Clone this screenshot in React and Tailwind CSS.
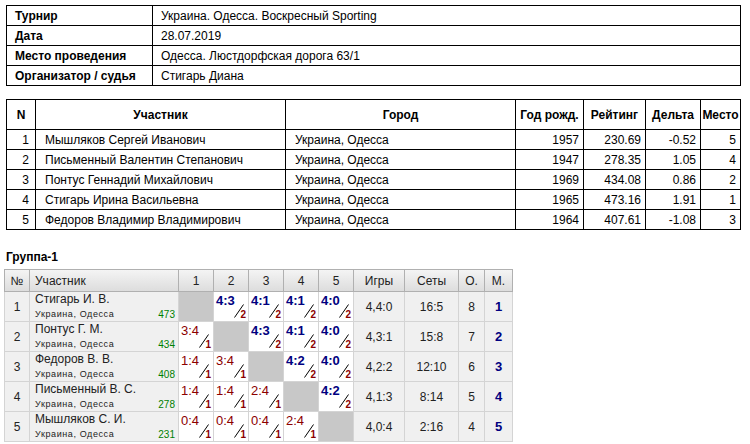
import React from 'react';

const info = [
  ['Турнир', 'Украина. Одесса. Воскресный Sporting'],
  ['Дата', '28.07.2019'],
  ['Место проведения', 'Одесса. Люстдорфская дорога 63/1'],
  ['Организатор / судья', 'Стигарь Диана'],
];

const players = [
  [1, 'Мышляков Сергей Иванович', 'Украина, Одесса', 1957, '230.69', '-0.52', 5],
  [2, 'Письменный Валентин Степанович', 'Украина, Одесса', 1947, '278.35', '1.05', 4],
  [3, 'Понтус Геннадий Михайлович', 'Украина, Одесса', 1969, '434.08', '0.86', 2],
  [4, 'Стигарь Ирина Васильевна', 'Украина, Одесса', 1965, '473.16', '1.91', 1],
  [5, 'Федоров Владимир Владимирович', 'Украина, Одесса', 1964, '407.61', '-1.08', 3],
];

const group = [
  { name: 'Стигарь И. В.', r: 473, res: [null, '4:3', '4:1', '4:1', '4:0'], g: '4,4:0', s: '16:5', o: 8 },
  { name: 'Понтус Г. М.', r: 434, res: ['3:4', null, '4:3', '4:1', '4:0'], g: '4,3:1', s: '15:8', o: 7 },
  { name: 'Федоров В. В.', r: 408, res: ['1:4', '3:4', null, '4:2', '4:0'], g: '4,2:2', s: '12:10', o: 6 },
  { name: 'Письменный В. С.', r: 278, res: ['1:4', '1:4', '2:4', null, '4:2'], g: '4,1:3', s: '8:14', o: 5 },
  { name: 'Мышляков С. И.', r: 231, res: ['0:4', '0:4', '0:4', '2:4', null], g: '4,0:4', s: '2:16', o: 4 },
];

const Score = ({ v }) => {
  const win = v[0] === '4';
  return (
    <div className="relative h-[29px] w-full">
      <span className={`absolute left-[2px] top-[2px] text-[13px] leading-[14px] ${win ? 'font-bold text-[#000080]' : 'text-[#8b0000]'}`}>{v}</span>
      <svg className="absolute left-[20px] top-[12px]" width="10" height="14"><line x1="0.5" y1="13.5" x2="9.5" y2="0.5" stroke="#000" strokeWidth="1" /></svg>
      <span className="absolute right-[2px] bottom-[1px] text-[10px] leading-[10px] font-bold text-[#8b0000]">{win ? 2 : 1}</span>
    </div>
  );
};

export default function App() {
  return (
    <div className="bg-white w-[750px] h-[444px] overflow-hidden text-[12px] leading-[14px] text-black whitespace-nowrap" style={{ fontFamily: '"Liberation Sans", Arial, sans-serif' }}>
      <div className="pl-[6px] pt-[5px]">
        <table className="border-collapse w-[735px] table-fixed">
          <colgroup><col className="w-[146px]" /><col /></colgroup>
          <tbody>
            {info.map(([k, v]) => (
              <tr key={k} className="h-[20px]">
                <td className="border border-black px-[8px] font-bold">{k}</td>
                <td className="border border-black px-[8px]">{v}</td>
              </tr>
            ))}
          </tbody>
        </table>

        <table className="border-collapse w-[735px] table-fixed mt-[13px]">
          <colgroup>
            <col className="w-[29px]" /><col className="w-[250px]" /><col className="w-[230px]" />
            <col className="w-[68px]" /><col className="w-[62px]" /><col className="w-[55px]" /><col />
          </colgroup>
          <thead>
            <tr className="h-[30px] font-bold">
              {['N', 'Участник', 'Город', 'Год рожд.', 'Рейтинг', 'Дельта', 'Место'].map(h => (
                <td key={h} className="border border-black text-center">{h}</td>
              ))}
            </tr>
          </thead>
          <tbody>
            {players.map(p => (
              <tr key={p[0]} className="h-[20px]">
                <td className="border border-black text-right pr-[6px]">{p[0]}</td>
                <td className="border border-black px-[9px]">{p[1]}</td>
                <td className="border border-black px-[9px]">{p[2]}</td>
                <td className="border border-black text-right pr-[4px]">{p[3]}</td>
                <td className="border border-black text-right pr-[4px]">{p[4]}</td>
                <td className="border border-black text-right pr-[4px]">{p[5]}</td>
                <td className="border border-black text-right pr-[4px]">{p[6]}</td>
              </tr>
            ))}
          </tbody>
        </table>
      </div>

      <div className="pl-[4px] pt-[20px]">
        <div className="font-bold text-[12px] leading-[14px] pl-[2px] mb-[5px]">Группа-1</div>
        <table className="border-collapse table-fixed w-[509px] bg-[#f0f0f0]">
          <colgroup>
            <col className="w-[25px]" /><col className="w-[149px]" />
            <col className="w-[35px]" /><col className="w-[35px]" /><col className="w-[35px]" /><col className="w-[35px]" /><col className="w-[35px]" />
            <col className="w-[51px]" /><col className="w-[54px]" /><col className="w-[26px]" /><col />
          </colgroup>
          <thead>
            <tr className="h-[22px] bg-gradient-to-b from-[#f4f4f4] to-[#dcdcdc] text-[#222]">
              {['№', 'Участник', '1', '2', '3', '4', '5', 'Игры', 'Сеты', 'О.', 'М.'].map((h, i) => (
                <td key={i} className={`border border-[#b0b0b0] p-0 ${i === 1 ? 'text-left pl-[5px]' : 'text-center'}`}>{h}</td>
              ))}
            </tr>
          </thead>
          <tbody>
            {group.map((p, i) => (
              <tr key={i} className="h-[30px] text-[#222]">
                <td className="border border-[#d4d4d4] text-center p-0">{i + 1}</td>
                <td className="border border-[#d4d4d4] pl-[5px] pr-[3px] py-0 leading-[13px]">
                  <div className="text-[12px]">{p.name}</div>
                  <div className="flex justify-between text-[9px] mt-[2px]">
                    <span className="tracking-[0.6px]">Украина, Одесса</span>
                    <span className="text-[#008000] text-[10px]">{p.r}</span>
                  </div>
                </td>
                {p.res.map((v, j) => (
                  <td key={j} className={`border border-[#d4d4d4] p-0 ${v ? 'bg-white' : 'bg-[#c8c8c8]'}`}>
                    {v && <Score v={v} />}
                  </td>
                ))}
                <td className="border border-[#d4d4d4] text-center p-0">{p.g}</td>
                <td className="border border-[#d4d4d4] text-center p-0">{p.s}</td>
                <td className="border border-[#d4d4d4] text-center p-0">{p.o}</td>
                <td className="border border-[#d4d4d4] text-center p-0 font-bold text-[13px] text-[#000080]">{i + 1}</td>
              </tr>
            ))}
          </tbody>
        </table>
      </div>
    </div>
  );
}
